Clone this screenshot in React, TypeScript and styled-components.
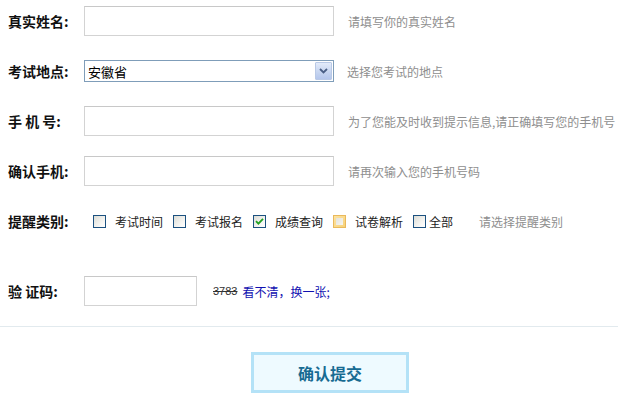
import React from "react";
import styled, { createGlobalStyle } from "styled-components";

const GlobalStyle = createGlobalStyle`
  body {
    margin: 0;
    background: #fff;
    font-family: "Noto Sans CJK SC", "Liberation Sans", sans-serif;
    font-size: 12px;
    color: #333;
  }
`;

const Form = styled.form`
  padding-top: 6px;
  width: 618px;
`;

const Row = styled.div<{ $gap?: number }>`
  display: flex;
  align-items: center;
  height: 30px;
  margin-bottom: ${(p) => (p.$gap === undefined ? 20 : p.$gap)}px;
`;

const Label = styled.label`
  width: 76px;
  padding-left: 8px;
  font-size: 14px;
  font-weight: bold;
  color: #111;
  white-space: pre;
  line-height: 30px;
`;

const TextInput = styled.input<{ $w?: number }>`
  box-sizing: border-box;
  width: ${(p) => p.$w ?? 250}px;
  height: 30px;
  border: 1px solid #d3d3d3;
  border-top-color: #c8c8c8;
  padding: 0 4px;
  outline: none;
  font-size: 13px;
`;

const Hint = styled.span<{ $ml?: number }>`
  margin-left: ${(p) => p.$ml ?? 14}px;
  color: #8e8e8e;
  font-size: 12px;
`;

const FakeSelect = styled.div`
  box-sizing: border-box;
  width: 250px;
  height: 22px;
  border: 1px solid #7f9db9;
  display: flex;
  align-items: center;
  justify-content: space-between;
  padding: 1px 1px 1px 3px;
  font-size: 13px;
  color: #000;
`;

const ArrowBtn = styled.span`
  box-sizing: border-box;
  width: 17px;
  height: 18px;
  border: 1px solid #b9c9e6;
  border-radius: 1px;
  background: linear-gradient(180deg, #e3ebfa 0%, #c5d4f0 60%, #b4c6ec 100%);
  display: flex;
  align-items: center;
  justify-content: center;
`;

const Checks = styled.div`
  display: flex;
  align-items: center;
  margin-left: 9px;
`;

const CheckItem = styled.span<{ $tight?: boolean }>`
  display: flex;
  align-items: center;
  margin-right: ${(p) => (p.$tight ? 26 : 10)}px;
  gap: ${(p) => (p.$tight ? 3 : 9)}px;
  font-size: 12px;
  color: #222;
`;

const Box = styled.span<{ $hover?: boolean }>`
  box-sizing: border-box;
  width: 13px;
  height: 13px;
  border: 1px solid ${(p) => (p.$hover ? "#e9b95c" : "#1c5180")};
  background: ${(p) =>
    p.$hover
      ? "linear-gradient(135deg, #fde3a0, #f7d27a)"
      : "linear-gradient(135deg, #dcdcd5 0%, #f4f4f1 60%, #fff 100%)"};
  display: flex;
  align-items: center;
  justify-content: center;
  position: relative;
  &::after {
    content: "";
    display: ${(p) => (p.$hover ? "block" : "none")};
    width: 7px;
    height: 7px;
    background: linear-gradient(135deg, #e4e2da, #f6f5f0);
  }
`;

const Code = styled.span`
  margin-left: 16px;
  font-size: 11px;
  color: #333;
  text-decoration: line-through;
  font-family: "Liberation Sans", sans-serif;
`;

const Refresh = styled.a`
  margin-left: 5px;
  color: #1010b0;
  font-size: 12px;
  text-decoration: none;
  cursor: pointer;
`;

const Divider = styled.hr`
  border: none;
  border-top: 1px solid #e2eaee;
  margin: 20px 0 0;
`;

const ButtonRow = styled.div`
  padding: 25px 0 0 251px;
`;

const Submit = styled.button`
  box-sizing: border-box;
  width: 158px;
  height: 41px;
  border: 3px solid #b4e2f7;
  background: #eefaff;
  color: #176b92;
  font-family: "Noto Sans CJK SC", sans-serif;
  font-size: 16px;
  font-weight: bold;
  cursor: pointer;
`;

const options = [
  { text: "考试时间", checked: false },
  { text: "考试报名", checked: false },
  { text: "成绩查询", checked: true },
  { text: "试卷解析", hover: true },
];

const Check = () => (
  <svg width="9" height="9" viewBox="0 0 9 9">
    <path d="M1 4.2 L3.4 6.6 L8 1.8" fill="none" stroke="#21a121" strokeWidth="1.8" />
  </svg>
);

const App = () => {
  return (
    <>
      <GlobalStyle />
      <Form onSubmit={(e) => e.preventDefault()}>
        <Row>
          <Label>真实姓名:</Label>
          <TextInput />
          <Hint>请填写你的真实姓名</Hint>
        </Row>
        <Row>
          <Label>考试地点:</Label>
          <FakeSelect>
            <span>安徽省</span>
            <ArrowBtn>
              <svg width="9" height="6" viewBox="0 0 9 6">
                <path d="M1 1 L4.5 4.5 L8 1" fill="none" stroke="#4a5f86" strokeWidth="1.8" />
              </svg>
            </ArrowBtn>
          </FakeSelect>
          <Hint $ml={13}>选择您考试的地点</Hint>
        </Row>
        <Row>
          <Label>{"手 机 号:"}</Label>
          <TextInput />
          <Hint>为了您能及时收到提示信息,请正确填写您的手机号</Hint>
        </Row>
        <Row>
          <Label>确认手机:</Label>
          <TextInput />
          <Hint>请再次输入您的手机号码</Hint>
        </Row>
        <Row $gap={40}>
          <Label>提醒类别:</Label>
          <Checks>
            {options.map((o) => (
              <CheckItem key={o.text}>
                <Box $hover={o.hover}>{o.checked && <Check />}</Box>
                {o.text}
              </CheckItem>
            ))}
            <CheckItem $tight>
              <Box />
              全部
            </CheckItem>
            <Hint $ml={0}>请选择提醒类别</Hint>
          </Checks>
        </Row>
        <Row $gap={0}>
          <Label>{"验 证码:"}</Label>
          <TextInput $w={113} />
          <Code>3783</Code>
          <Refresh>看不清，换一张;</Refresh>
        </Row>
        <Divider />
        <ButtonRow>
          <Submit type="submit">确认提交</Submit>
        </ButtonRow>
      </Form>
    </>
  );
};

export default App;
